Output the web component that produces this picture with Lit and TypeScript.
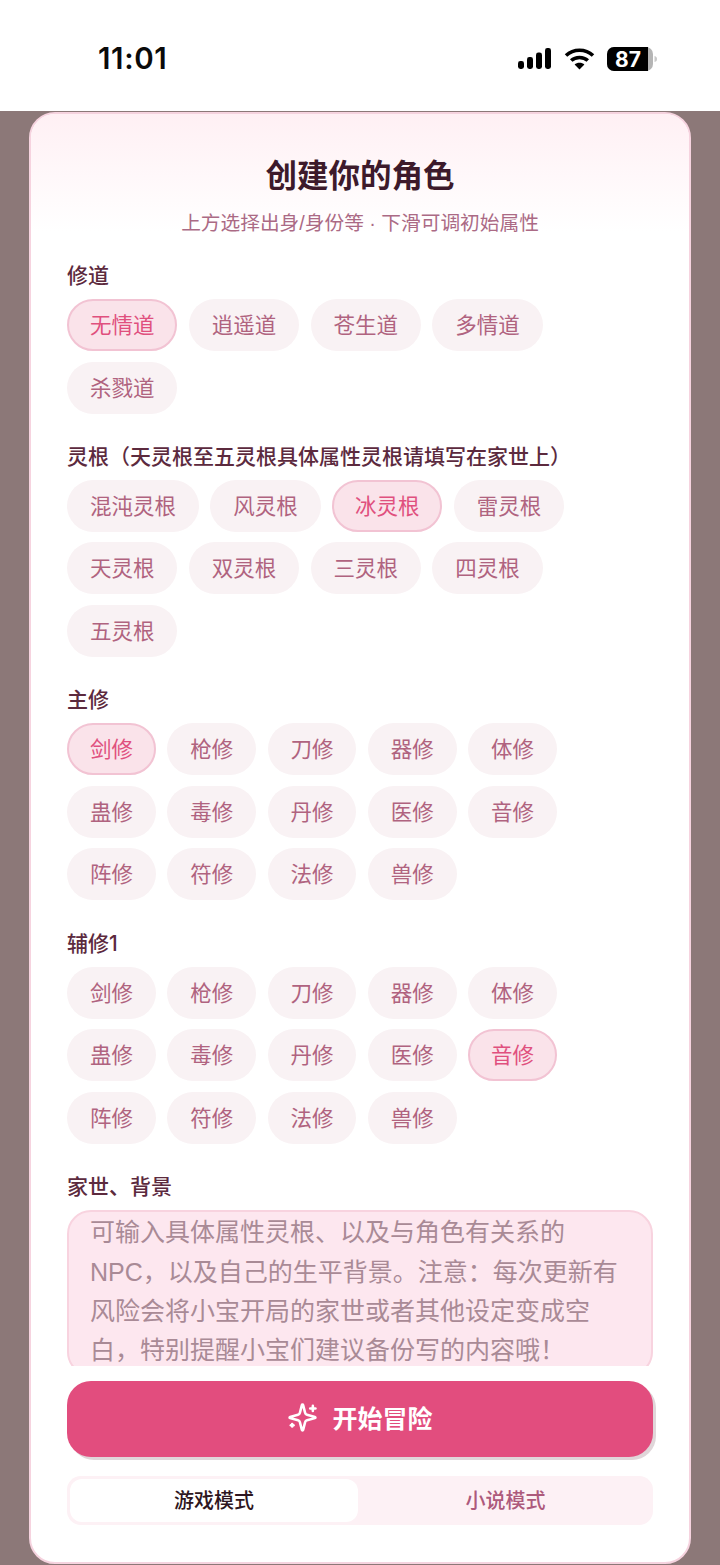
import { LitElement, html, css, svg } from "lit";
import { customElement } from "lit/decorators.js";
import { classMap } from "lit/directives/class-map.js";

const cult = ["剑修","枪修","刀修","器修","体修","蛊修","毒修","丹修","医修","音修","阵修","符修","法修","兽修"];
const sections = [
  { label: "修道", items: ["无情道","逍遥道","苍生道","多情道","杀戮道"], active: "无情道" },
  { label: "灵根（天灵根至五灵根具体属性灵根请填写在家世上）", items: ["混沌灵根","风灵根","冰灵根","雷灵根","天灵根","双灵根","三灵根","四灵根","五灵根"], active: "冰灵根" },
  { label: "主修", items: cult, active: "剑修" },
  { label: "辅修1", items: cult, active: "音修" },
];

@customElement("app-root")
export class AppRoot extends LitElement {
  static styles = css`
    :host { display: block; width: 720px; height: 1565px; overflow: hidden; background: #8c7878;
      font-family: "Liberation Sans", "Noto Sans CJK SC", sans-serif; }
    .status { height: 111px; background: #fff; display: flex; align-items: center; justify-content: space-between;
      padding: 6px 62px 0 98px; box-sizing: border-box; }
    .time { font: 600 29.5px/1 "Inter", "Liberation Sans", sans-serif; color: #0a0a0a; letter-spacing: 0.6px; }
    .icons { display: flex; align-items: center; gap: 12px; }
    .icons svg { display: block; }
    .card { box-sizing: border-box; width: 662px; height: 1452px; margin: 1px 0 0 29px; background: #fff;
      border: 2px solid #f6d3df; border-radius: 26px; display: flex; flex-direction: column; overflow: hidden; }
    .scroll { flex: 1; min-height: 0; overflow: hidden; }
    .head { height: 147px; box-sizing: border-box; padding-top: 37px; text-align: center;
      background: linear-gradient(#fff0f4, #fff 80%); }
    h1 { margin: 0; font-size: 31.5px; line-height: 50px; font-weight: 700; color: #3d1a2b; }
    .sub { margin: 0; font-size: 19.7px; line-height: 28px; margin-top: 8px; color: #ab6a85; }
    .body { padding: 0 36px; display: flex; flex-direction: column; gap: 28.1px; }
    .label { font-family: "Inter", "Noto Sans CJK SC", sans-serif; font-size: 21px; line-height: 28px; font-weight: 500;
      color: #5c2a3e; padding-top: 1px; margin-bottom: 9px; }
    .chips { display: flex; flex-wrap: wrap; gap: 10.67px 11.4px; }
    .chip { box-sizing: border-box; height: 52px; line-height: 52px; padding: 0 21.95px; border-radius: 26px;
      border: 1px solid transparent; background: #f9f2f4; color: #b0637f; font-size: 21.5px; white-space: nowrap; }
    .chip.on { background: #fae3ea; border: 2px solid #f2c3d3; line-height: 50px; padding: 0 20.95px; color: #e0507e; }
    .area { box-sizing: border-box; height: 166px; border: 2px solid #f8d3df; border-radius: 24px; background: #fde7ef;
      padding: 1.5px 22px 0 21px; font-size: 25px; line-height: 39.3px; color: #a98a96; }
    .foot { padding: 15px 36px 37px; }
    .go { height: 76px; box-sizing: border-box; border-radius: 24px; background: #e24d7e; box-shadow: 3px 3px 0 #e0d6d9;
      display: flex; align-items: center; justify-content: center; gap: 14px; color: #fff;
      font-size: 25px; font-weight: 700; }
    .go svg { margin-bottom: 3px; }
    .go span { margin-bottom: 4px; }
    .tabs { margin-top: 19px; height: 49px; box-sizing: border-box; padding: 3px; border-radius: 14px; background: #fdf1f5;
      display: grid; grid-template-columns: 288px 1fr; }
    .tab { display: flex; align-items: center; justify-content: center; font-size: 20px; font-weight: 500;
      padding: 0 0 2px 3px; border-radius: 12px; color: #ad5a7c; }
    .tab.on { background: #fff; color: #2e1620; padding-left: 0; }
  `;

  render() {
    return html`
      <div class="status">
        <span class="time">11:01</span>
        <div class="icons">
          <svg width="35" height="23" viewBox="0 0 35 23" fill="#000">
            <rect x="1" y="14" width="6" height="8" rx="2.4"/><rect x="10" y="10" width="6" height="12" rx="2.4"/>
            <rect x="19" y="5.5" width="6" height="16.5" rx="2.4"/><rect x="28" y="1" width="6" height="21" rx="2.4"/>
          </svg>
          <svg width="31" height="23" viewBox="0 0 31 23" fill="none" stroke="#000" stroke-width="3.6">
            <path d="M2 8.5C9.5 1.5 21.5 1.5 29 8.5"/><path d="M7.2 13.5C11.6 9.4 19.4 9.4 23.8 13.5"/>
            <path d="M15.5 22.5L10.6 17.6C13 15.2 18 15.2 20.4 17.6Z" fill="#000" stroke="none"/>
          </svg>
          <svg width="51" height="24" viewBox="0 0 51 24">
            <rect x="0" y="0" width="46" height="24" rx="7" fill="#b5b5b5"/>
            <path d="M7 0H41V24H7A7 7 0 0 1 0 17V7A7 7 0 0 1 7 0Z" fill="#000"/>
            <path d="M47.5 9C49.5 9.5 50 10.5 50 12S49.5 14.5 47.5 15Z" fill="#c9c9c9"/>
            <text x="21" y="19.5" text-anchor="middle" fill="#fff" font-size="21" font-weight="700" font-family="Inter, Liberation Sans, sans-serif">87</text>
          </svg>
        </div>
      </div>
      <div class="card">
        <div class="scroll">
          <div class="head">
            <h1>创建你的角色</h1>
            <p class="sub">上方选择出身/身份等 · 下滑可调初始属性</p>
          </div>
          <div class="body">
            ${sections.map(s => html`
              <section>
                <div class="label">${s.label}</div>
                <div class="chips">
                  ${s.items.map(i => html`<span class=${classMap({ chip: true, on: i === s.active })}>${i}</span>`)}
                </div>
              </section>`)}
            <section>
              <div class="label">家世、背景</div>
              <div class="area">可输入具体属性灵根、以及与角色有关系的NPC，以及自己的生平背景。注意：每次更新有风险会将小宝开局的家世或者其他设定变成空白，特别提醒小宝们建议备份写的内容哦！</div>
            </section>
          </div>
        </div>
        <div class="foot">
          <div class="go">
            <svg width="31" height="31" viewBox="0 0 24 24" fill="none" stroke="#fff" stroke-width="2" stroke-linecap="round" stroke-linejoin="round">
              ${svg`<path d="M9.937 15.5A2 2 0 0 0 8.5 14.063l-6.135-1.582a.5.5 0 0 1 0-.962L8.5 9.936A2 2 0 0 0 9.937 8.5l1.582-6.135a.5.5 0 0 1 .963 0L14.063 8.5A2 2 0 0 0 15.5 9.937l6.135 1.581a.5.5 0 0 1 0 .964L15.5 14.063a2 2 0 0 0-1.437 1.437l-1.582 6.135a.5.5 0 0 1-.963 0z"/><path d="M20 3v4"/><path d="M22 5h-4"/><path d="M4 17v2"/><path d="M5 18H3"/>`}
            </svg>
            <span>开始冒险</span>
          </div>
          <div class="tabs">
            <div class="tab on">游戏模式</div>
            <div class="tab">小说模式</div>
          </div>
        </div>
      </div>
    `;
  }
}
